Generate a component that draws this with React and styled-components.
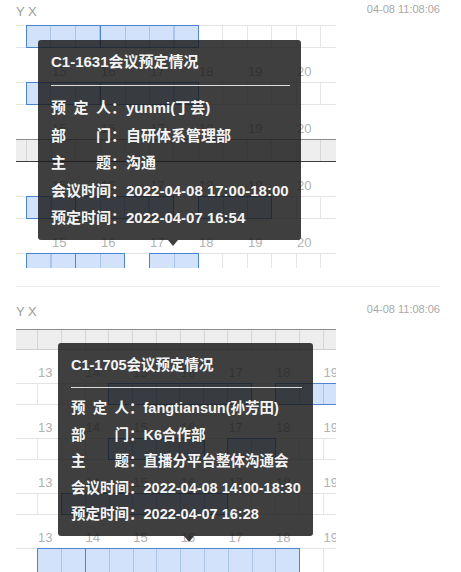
import React from "react";
import styled, { createGlobalStyle } from "styled-components";

const GlobalStyle = createGlobalStyle`
  html, body {
    margin: 0;
    padding: 0;
    background: #ffffff;
  }
  body {
    font-family: "Liberation Sans", "Noto Sans CJK SC", Arial, sans-serif;
    overflow: hidden;
  }
`;

const Feed = styled.div`
  width: 461px;
  box-sizing: border-box;
  padding: 0 21px 0 16px;
`;

const Post = styled.section`
  padding: ${(p) => p.$top}px 0 ${(p) => p.$bottom}px;
  border-bottom: ${(p) => (p.$last ? "none" : "1px solid #ececec")};
`;

const PostHeader = styled.div`
  display: flex;
  justify-content: space-between;
  align-items: flex-start;
  height: 20px;
`;

const Author = styled.span`
  font-size: 13px;
  line-height: 20px;
  color: #9c9c9c;
`;

const Stamp = styled.span`
  font-size: 11px;
  line-height: 14px;
  color: #a8a8a8;
`;

const Shot = styled.div`
  position: relative;
  width: 320px;
  height: ${(p) => p.$h}px;
  margin-top: ${(p) => p.$gap}px;
  overflow: hidden;
  background: #ffffff;
  font-family: "Liberation Sans", Arial, sans-serif;
`;

// vertical half-hour lines, one wide tile so there is no seam inside the shot
const gridLines = (origin, cell, color) => `
  background-image: repeating-linear-gradient(to right, ${color} 0 1px, transparent 1px ${cell}px);
  background-size: 3000px 100%;
  background-repeat: no-repeat;
  background-position: ${origin - cell * 60}px 0;
`;

const RoomRow = styled.div`
  position: relative;
  height: ${(p) => p.$h}px;
  box-sizing: border-box;
  border-top: 1px solid #e4e4e4;
  border-bottom: 1px solid #e4e4e4;
  ${(p) => gridLines(p.$origin, p.$cell, "#e6e6e6")}
`;

const BandRow = styled.div`
  height: ${(p) => p.$h}px;
  box-sizing: border-box;
  background-color: #eeeeee;
  border-top: 1px solid ${(p) => p.$topLine};
  border-bottom: 1px solid ${(p) => p.$bottomLine};
  ${(p) => gridLines(p.$origin, p.$cell, "#d6d6d6")}
`;

const Booking = styled.div`
  position: absolute;
  top: -1px;
  bottom: -1px;
  box-sizing: border-box;
  border: 1px solid #4d84d4;
  background-color: #d2e2fa;
  background-image: repeating-linear-gradient(
    to right,
    #a9c4ee 0 1px,
    transparent 1px ${(p) => p.$cell}px
  );
  background-origin: border-box;
  background-repeat: no-repeat;
`;

const LabelRow = styled.div`
  display: flex;
  height: ${(p) => p.$h}px;
  box-sizing: border-box;
  padding: ${(p) => p.$pt}px 0 0 ${(p) => p.$pl}px;
`;

const HourLabel = styled.span`
  flex: 0 0 ${(p) => p.$w}px;
  font-size: 13px;
  line-height: 14px;
  color: #b2b2b2;
  white-space: nowrap;
`;

const Tip = styled.div`
  position: absolute;
  left: ${(p) => p.$x}px;
  top: ${(p) => p.$y}px;
  width: ${(p) => p.$w}px;
  box-sizing: border-box;
  padding: 12px 11px 8px 13px;
  background: rgba(26, 26, 26, 0.84);
  border-radius: 3px;
  color: #f4f4f4;
  font-family: "Liberation Sans", "Noto Sans CJK SC", sans-serif;
  font-size: ${(p) => p.$fs}px;
  font-weight: 600;
  white-space: nowrap;
  &::after {
    content: "";
    position: absolute;
    top: 100%;
    left: ${(p) => p.$arrow - 5}px;
    border-left: 5px solid transparent;
    border-right: 5px solid transparent;
    border-top: 6px solid rgba(26, 26, 26, 0.84);
  }
`;

const TipTitle = styled.div`
  line-height: 20px;
  padding-bottom: ${(p) => p.$gap}px;
  border-bottom: 1px solid #dcdcdc;
  margin-bottom: ${(p) => p.$after}px;
`;

const TipLine = styled.div`
  display: flex;
  line-height: ${(p) => p.$lh}px;
`;

const TipKey = styled.span`
  display: flex;
  justify-content: space-between;
  width: 4em;
`;

const shots = [
  {
    author: "Y X",
    time: "04-08 11:08:06",
    top: 2,
    bottom: 18,
    gap: 3,
    height: 243,
    cell: 24.5,
    origin: 10,
    startHour: 14.5,
    hours: [15, 16, 17, 18, 19, 20],
    labelLeft: 1.5,
    roomH: 23,
    labelH: 34,
    labelTop: 17,
    bandLines: ["#8c8c8c", "#3c3c3c"],
    rows: [
      { kind: "room", blocks: [[14.5, 16], [16, 18]] },
      { kind: "label" },
      { kind: "room", blocks: [[14.5, 16], [16, 18]] },
      { kind: "label" },
      { kind: "band" },
      { kind: "label" },
      { kind: "room", blocks: [[14.5, 15.5], [15.5, 17.5], [18, 19.5]] },
      { kind: "label" },
      { kind: "room", blocks: [[14.5, 15.5], [15.5, 16.5], [17, 18]] },
    ],
    tip: {
      x: 22,
      y: 15,
      w: 263,
      fs: 15,
      lh: 27.5,
      gap: 13,
      after: 8,
      arrow: 135,
      title: "C1-1631会议预定情况",
      lines: [
        ["预定人", "yunmi(丁芸)"],
        ["部门", "自研体系管理部"],
        ["主题", "沟通"],
        ["会议时间", "2022-04-08 17:00-18:00"],
        ["预定时间", "2022-04-07 16:54"],
      ],
    },
  },
  {
    author: "Y X",
    time: "04-08 11:08:06",
    top: 15,
    bottom: 0,
    gap: 7,
    height: 243,
    cell: 23.8,
    origin: 21,
    startHour: 13,
    hours: [13, 14, 15, 16, 17, 18, 19],
    labelLeft: 1,
    roomH: 22,
    labelH: 33,
    labelTop: 16,
    bandLines: ["#8c8c8c", "#cfcfcf"],
    bandH: 21,
    rows: [
      { kind: "band" },
      { kind: "label" },
      { kind: "room", blocks: [[14.5, 17.5], [18, 20]] },
      { kind: "label" },
      { kind: "room", blocks: [[14.5, 16.5], [17, 18]] },
      { kind: "label" },
      { kind: "room", blocks: [[13.5, 17]] },
      { kind: "label" },
      { kind: "room", blocks: [[13, 14], [14, 18.5]], h: 26 },
    ],
    tip: {
      x: 42,
      y: 14,
      w: 255,
      fs: 14.5,
      lh: 26.5,
      gap: 12,
      after: 7,
      arrow: 131,
      title: "C1-1705会议预定情况",
      lines: [
        ["预定人", "fangtiansun(孙芳田)"],
        ["部门", "K6合作部"],
        ["主题", "直播分平台整体沟通会"],
        ["会议时间", "2022-04-08 14:00-18:30"],
        ["预定时间", "2022-04-07 16:28"],
      ],
    },
  },
];

const Schedule = ({ s }) => {
  const px = (t) => s.origin + (t - s.startHour) * 2 * s.cell;
  return (
    <Shot $h={s.height} $gap={s.gap}>
      {s.rows.map((row, i) => {
        if (row.kind === "band") {
          return (
            <BandRow
              key={i}
              $h={s.bandH || s.roomH}
              $origin={s.origin}
              $cell={s.cell}
              $topLine={s.bandLines[0]}
              $bottomLine={s.bandLines[1]}
            />
          );
        }
        if (row.kind === "label") {
          return (
            <LabelRow
              key={i}
              $h={s.labelH}
              $pt={s.labelTop}
              $pl={px(s.hours[0]) + s.labelLeft}
            >
              {s.hours.map((h) => (
                <HourLabel key={h} $w={s.cell * 2}>
                  {h}
                </HourLabel>
              ))}
            </LabelRow>
          );
        }
        return (
          <RoomRow key={i} $h={row.h || s.roomH} $origin={s.origin} $cell={s.cell}>
            {row.blocks.map(([a, b]) => (
              <Booking
                key={a}
                $cell={s.cell}
                style={{ left: px(a), width: px(b) - px(a) + 1 }}
              />
            ))}
          </RoomRow>
        );
      })}
      <Tip $x={s.tip.x} $y={s.tip.y} $w={s.tip.w} $fs={s.tip.fs} $arrow={s.tip.arrow}>
        <TipTitle $gap={s.tip.gap} $after={s.tip.after}>
          {s.tip.title}
        </TipTitle>
        {s.tip.lines.map(([k, v]) => (
          <TipLine key={k} $lh={s.tip.lh}>
            <TipKey>
              {k.split("").map((c, j) => (
                <span key={j}>{c}</span>
              ))}
            </TipKey>
            <span>：</span>
            <span>{v}</span>
          </TipLine>
        ))}
      </Tip>
    </Shot>
  );
};

export default function App() {
  return (
    <>
      <GlobalStyle />
      <Feed>
        {shots.map((s, i) => (
          <Post key={i} $top={s.top} $bottom={s.bottom} $last={i === shots.length - 1}>
            <PostHeader>
              <Author>{s.author}</Author>
              <Stamp>{s.time}</Stamp>
            </PostHeader>
            <Schedule s={s} />
          </Post>
        ))}
      </Feed>
    </>
  );
}
